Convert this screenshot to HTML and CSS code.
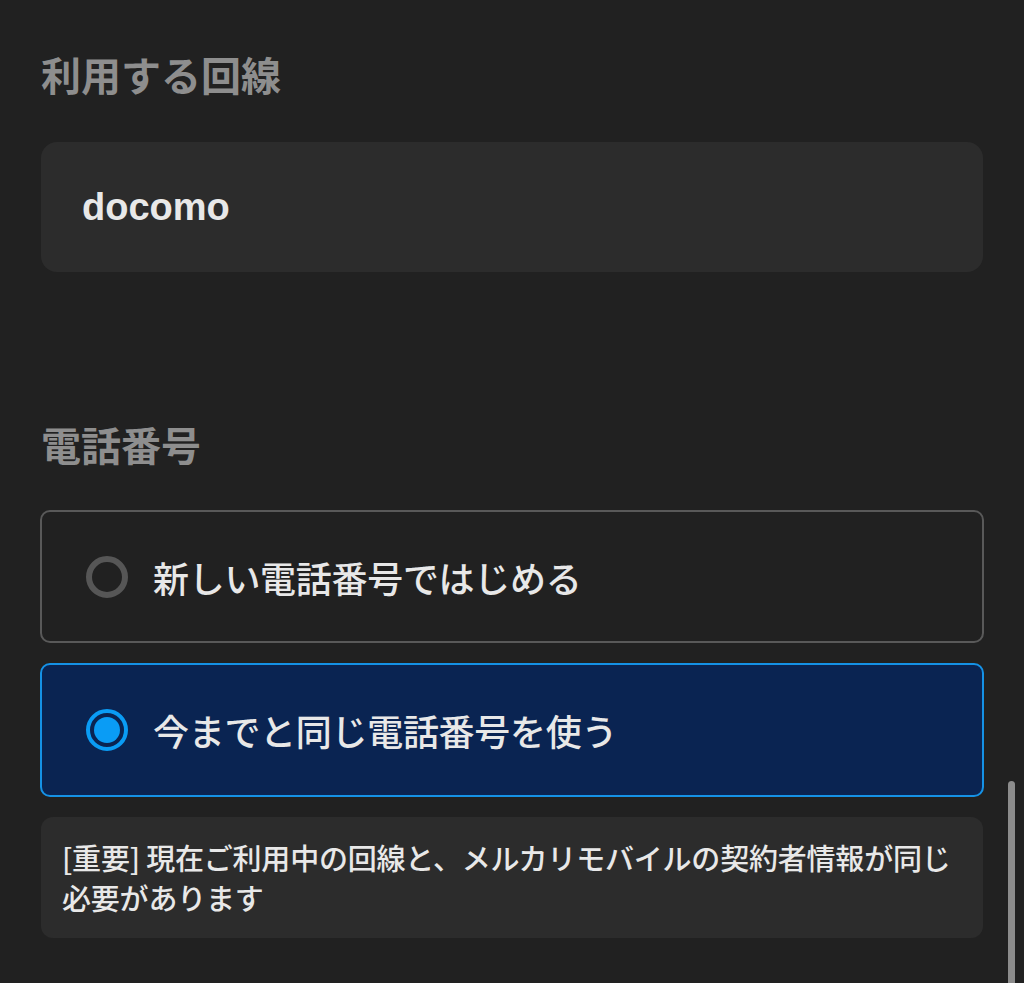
FILE: index.html
```html
<!DOCTYPE html>
<html lang="ja">
<head>
<meta charset="utf-8">
<link rel="stylesheet" href="styles.css">
</head>
<body>
<main class="page">
  <h2 class="section-title first">利用する回線</h2>
  <div class="carrier-card">docomo</div>

  <h2 class="section-title second">電話番号</h2>
  <div class="options">
    <div class="option">
      <span class="radio"></span>
      <span class="option-label">新しい電話番号ではじめる</span>
    </div>
    <div class="option selected">
      <span class="radio"><span class="dot"></span></span>
      <span class="option-label">今までと同じ電話番号を使う</span>
    </div>
    <div class="note">[重要] 現在ご利用中の回線と、メルカリモバイルの契約者情報が同じ<br>必要があります</div>
  </div>
</main>
<div class="scrollbar"></div>
</body>
</html>
```
FILE: styles.css
```css
html, body {
  margin: 0;
  padding: 0;
  background: #212121;
  height: 100%;
  overflow: hidden;
}
body {
  font-family: "Noto Sans CJK JP", "Noto Sans", sans-serif;
  color: #e8e8e8;
}
.page {
  padding: 0 41px;
}
.section-title {
  margin: 0;
  font-size: 40px;
  line-height: 56px;
  font-weight: 700;
  color: #8e8e8e;
}
.section-title.first {
  padding-top: 46px;
}
.section-title.second {
  margin-top: 144px;
}
.carrier-card {
  margin-top: 40px;
  height: 130px;
  box-sizing: border-box;
  background: #2c2c2c;
  border-radius: 16px;
  padding-left: 41px;
  display: flex;
  align-items: center;
  font-family: "Liberation Sans", Arial, sans-serif;
  font-weight: 700;
  font-size: 38px;
  color: #e8e8e8;
}
.options {
  margin-top: 38px;
  display: flex;
  flex-direction: column;
  gap: 20px;
}
.option {
  margin: 0 -1px;
  height: 133px;
  box-sizing: border-box;
  border: 2px solid #595959;
  border-radius: 10px;
  display: flex;
  align-items: center;
  padding-left: 44px;
  gap: 25px;
}
.option.selected {
  background: #0a2452;
  border-color: #1592e6;
  height: 134px;
}
.radio {
  width: 42px;
  height: 42px;
  box-sizing: border-box;
  border-radius: 50%;
  border: 6px solid #565656;
  display: flex;
  align-items: center;
  justify-content: center;
  flex: none;
}
.option.selected .radio {
  border: 4px solid #0a9cf5;
}
.dot {
  width: 26px;
  height: 26px;
  border-radius: 50%;
  background: #0a9cf5;
}
.option-label {
  font-size: 36px;
  font-weight: 500;
  color: #e8e8e8;
  letter-spacing: -0.3px;
}
.note {
  background: #2c2c2c;
  border-radius: 12px;
  padding: 20px 21px;
  font-size: 29px;
  line-height: 40px;
  font-weight: 500;
  color: #e8e8e8;
  height: 121px;
  box-sizing: border-box;
  letter-spacing: -0.2px;
  white-space: nowrap;
}
.scrollbar {
  position: fixed;
  left: 1008px;
  top: 781px;
  width: 7px;
  height: 260px;
  border-radius: 4px;
  background: #8c8c8c;
}
```
